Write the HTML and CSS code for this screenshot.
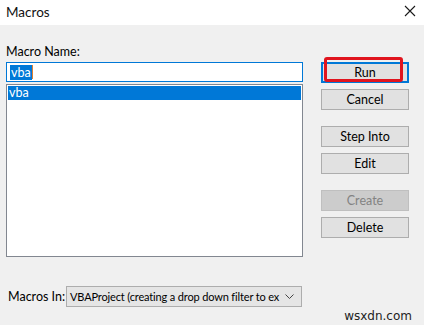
FILE: index.html
```html
<!DOCTYPE html>
<html lang="en">
<head>
    <meta charset="UTF-8">
    <meta name="viewport" content="width=device-width, initial-scale=1.0">
    <title>Macros</title>
    <link rel="stylesheet" href="styles.css">
</head>
<body>

    <!-- Title Bar -->
    <div class="titlebar">
        <span class="title">Macros</span>
        <svg class="close" width="12" height="12" viewBox="0 0 12 12">
            <path d="M1 1 L11 11 M11 1 L1 11" stroke="#1a1a1a" stroke-width="1.1" fill="none"/>
        </svg>
    </div>

    <div class="dialog">
        <div class="main">

            <!-- Macro Name + List -->
            <div class="left">
                <label class="label">Macro Name:</label>
                <div class="name-input"><span class="sel">vba</span><span class="caret"></span></div>
                <div class="list">
                    <div class="list-row">vba</div>
                </div>
            </div>

            <!-- Buttons -->
            <div class="buttons">
                <div class="btn btn-default">Run<span class="highlight"></span></div>
                <div class="btn gap-sm">Cancel</div>
                <div class="btn gap-lg">Step Into</div>
                <div class="btn gap-sm">Edit</div>
                <div class="btn btn-disabled gap-lg">Create</div>
                <div class="btn gap-sm">Delete</div>
            </div>
        </div>

        <!-- Macros In -->
        <div class="footer">
            <span class="footer-label">Macros In:</span>
            <div class="dropdown">
                <span class="dropdown-text">VBAProject (creating a drop down filter to ex</span>
                <svg class="chevron" width="9" height="5" viewBox="0 0 9 5">
                    <path d="M0.5 0.5 L4.5 4.5 L8.5 0.5" stroke="#444" stroke-width="1" fill="none"/>
                </svg>
            </div>
        </div>
    </div>

    <div class="watermark">wsxdn.com</div>

</body>
</html>
```

FILE: styles.css
```css
body {
    font-family: Lato, "Noto Sans", Arial, sans-serif;
    font-size: 12.5px;
    color: #000;
    background-color: #f0f0f0;
    margin: 0;
    width: 424px;
    height: 325px;
    position: relative;
    overflow: hidden;
}

/* Title Bar */
.titlebar {
    height: 25px;
    background-color: #fff;
    display: flex;
    align-items: center;
    justify-content: space-between;
    padding: 0 8px 0 6px;
}

.title {
    font-size: 13.5px;
    color: #111;
    margin-top: -2px;
}

.close {
    margin-top: -4px;
}

.dialog {
    padding: 19px 0 0 6px;
}

.main {
    display: flex;
}

/* Left column */
.left {
    width: 297px;
}

.label {
    display: block;
    line-height: 16px;
    height: 18px;
}

.name-input {
    height: 18px;
    border: 1px solid #0078d7;
    background-color: #fff;
    display: flex;
    align-items: center;
    padding-left: 3px;
}

.sel {
    background-color: #0078d7;
    color: #fff;
    line-height: 15px;
    padding: 0 1px;
}

.caret {
    width: 1px;
    height: 14px;
    background-color: #e08030;
}

.list {
    margin-top: 2px;
    height: 169px;
    border: 1px solid #828790;
    background-color: #fff;
    padding: 1px;
}

.list-row {
    background-color: #0078d7;
    color: #fff;
    line-height: 14px;
    padding-left: 1px;
}

/* Buttons */
.buttons {
    margin-left: 18px;
    margin-top: 18px;
    display: flex;
    flex-direction: column;
    width: 88px;
}

.btn {
    height: 19px;
    line-height: 19px;
    text-align: center;
    background-color: #e1e1e1;
    border: 1px solid #adadad;
}

.btn-default {
    position: relative;
    height: 17px;
    line-height: 17px;
    border: 2px solid #0078d7;
}

.highlight {
    position: absolute;
    left: 1px;
    right: 4px;
    top: -7px;
    bottom: -1px;
    border: 3px solid #e0141e;
    border-radius: 3px;
}

.btn-disabled {
    background-color: #cccccc;
    border-color: #bfbfbf;
    color: #838383;
}

.gap-sm {
    margin-top: 6px;
}

.gap-lg {
    margin-top: 16px;
}

/* Macros In */
.footer {
    display: flex;
    align-items: center;
    margin-top: 29px;
    padding-left: 2px;
}

.footer-label {
    white-space: nowrap;
    width: 58px;
}

.dropdown {
    box-sizing: border-box;
    width: 236px;
    height: 21px;
    border: 1px solid #adadad;
    background-color: #e5e5e5;
    display: flex;
    align-items: center;
    padding: 0 7px 0 3px;
}

.dropdown-text {
    flex: 1;
    min-width: 0;
    white-space: nowrap;
    font-size: 11px;
    letter-spacing: -0.15px;
}

.chevron {
    flex-shrink: 0;
    margin-left: 3px;
}

.watermark {
    position: absolute;
    right: 12px;
    bottom: 2px;
    font-family: "DejaVu Sans", sans-serif;
    font-size: 12px;
    color: #222;
}
```
